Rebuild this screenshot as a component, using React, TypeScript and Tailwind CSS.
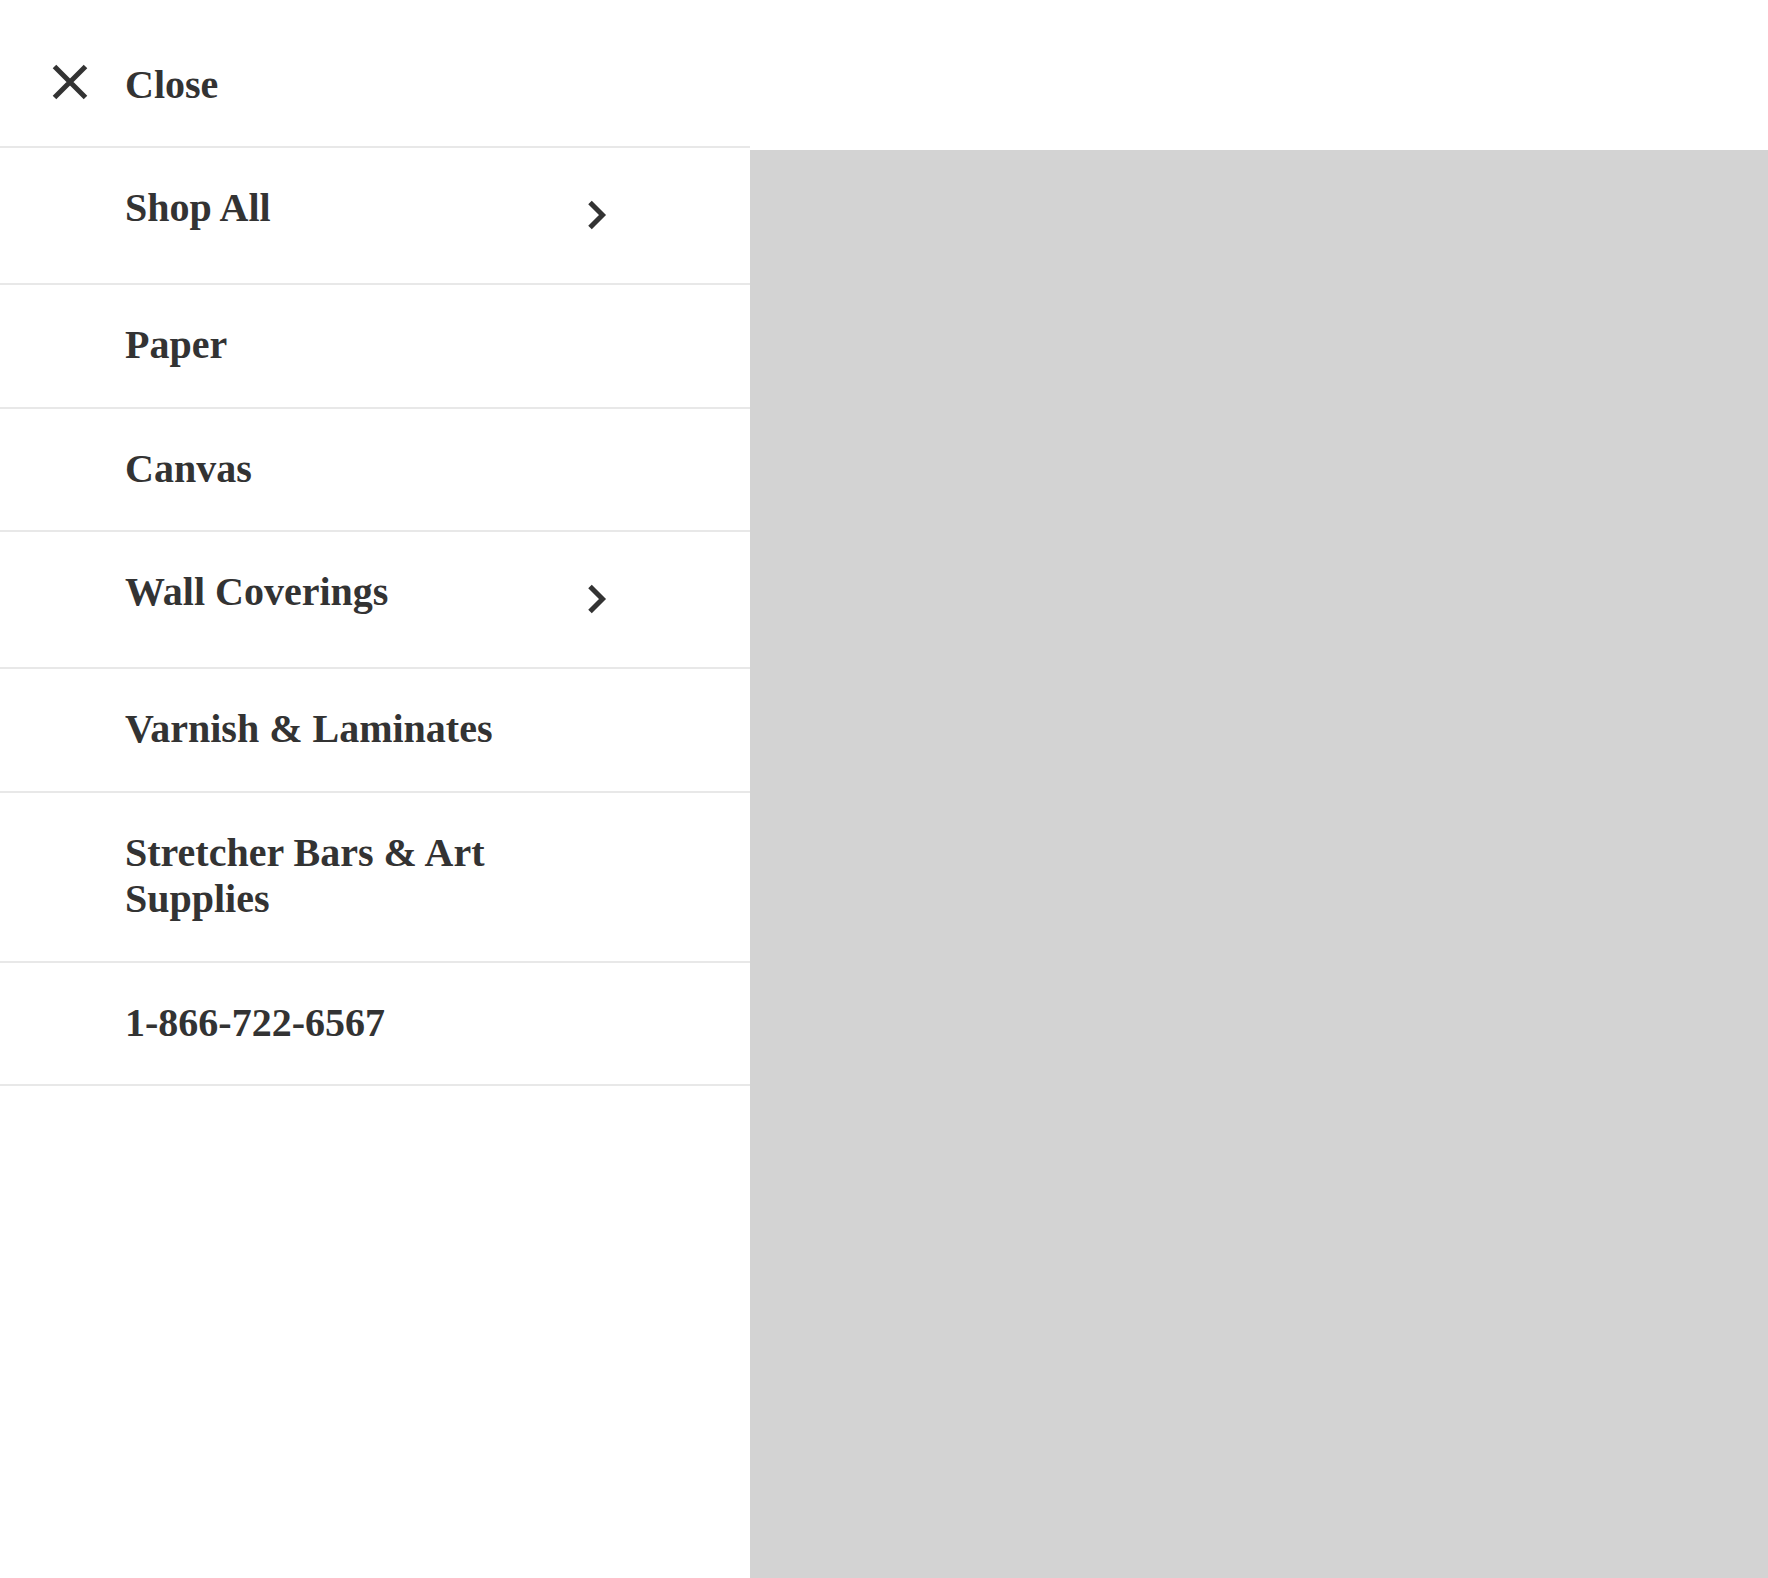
const items = [
  { label: 'Shop All', more: true },
  { label: 'Paper' },
  { label: 'Canvas' },
  { label: 'Wall Coverings', more: true },
  { label: 'Varnish & Laminates' },
  { label: 'Stretcher Bars & Art Supplies' },
  { label: '1-866-722-6567' },
]

function Chevron() {
  return (
    <svg width="24" height="60" viewBox="0 0 24 60" className="shrink-0">
      <polyline
        points="4,17.5 16.5,30 4,42.5"
        fill="none"
        stroke="#333333"
        strokeWidth="5"
        strokeLinejoin="miter"
      />
    </svg>
  )
}

export default function App() {
  return (
    <div className="flex min-h-[1578px] w-full bg-white text-[#333333] font-['Liberation_Serif','Times_New_Roman',serif]">
      <nav className="w-[750px] shrink-0 bg-white">
        <div className="flex items-start h-[148px] pt-[62px] pl-[52px] border-b-2 border-[#e8e8e8]">
          <svg width="36" height="36" viewBox="0 0 36 36" className="mt-[2px] shrink-0">
            <path d="M2.5 2.5 L33.5 33.5 M33.5 2.5 L2.5 33.5" stroke="#333333" strokeWidth="5" fill="none" />
          </svg>
          <span className="ml-[37px] text-[40px] font-bold leading-[46px]">Close</span>
        </div>
        <ul>
          {items.map((item) => (
            <li
              key={item.label}
              className="flex items-start pl-[125px] pr-[140px] pt-[37px] pb-[38px] border-b-2 border-[#e8e8e8]"
            >
              <span className="flex-1 min-w-0 text-[40px] font-bold leading-[46.5px]">{item.label}</span>
              {item.more && <Chevron />}
            </li>
          ))}
        </ul>
      </nav>
      <div className="flex flex-1 flex-col">
        <div className="h-[150px] bg-white" />
        <div className="flex-1 bg-[#d3d3d3]" />
      </div>
    </div>
  )
}
